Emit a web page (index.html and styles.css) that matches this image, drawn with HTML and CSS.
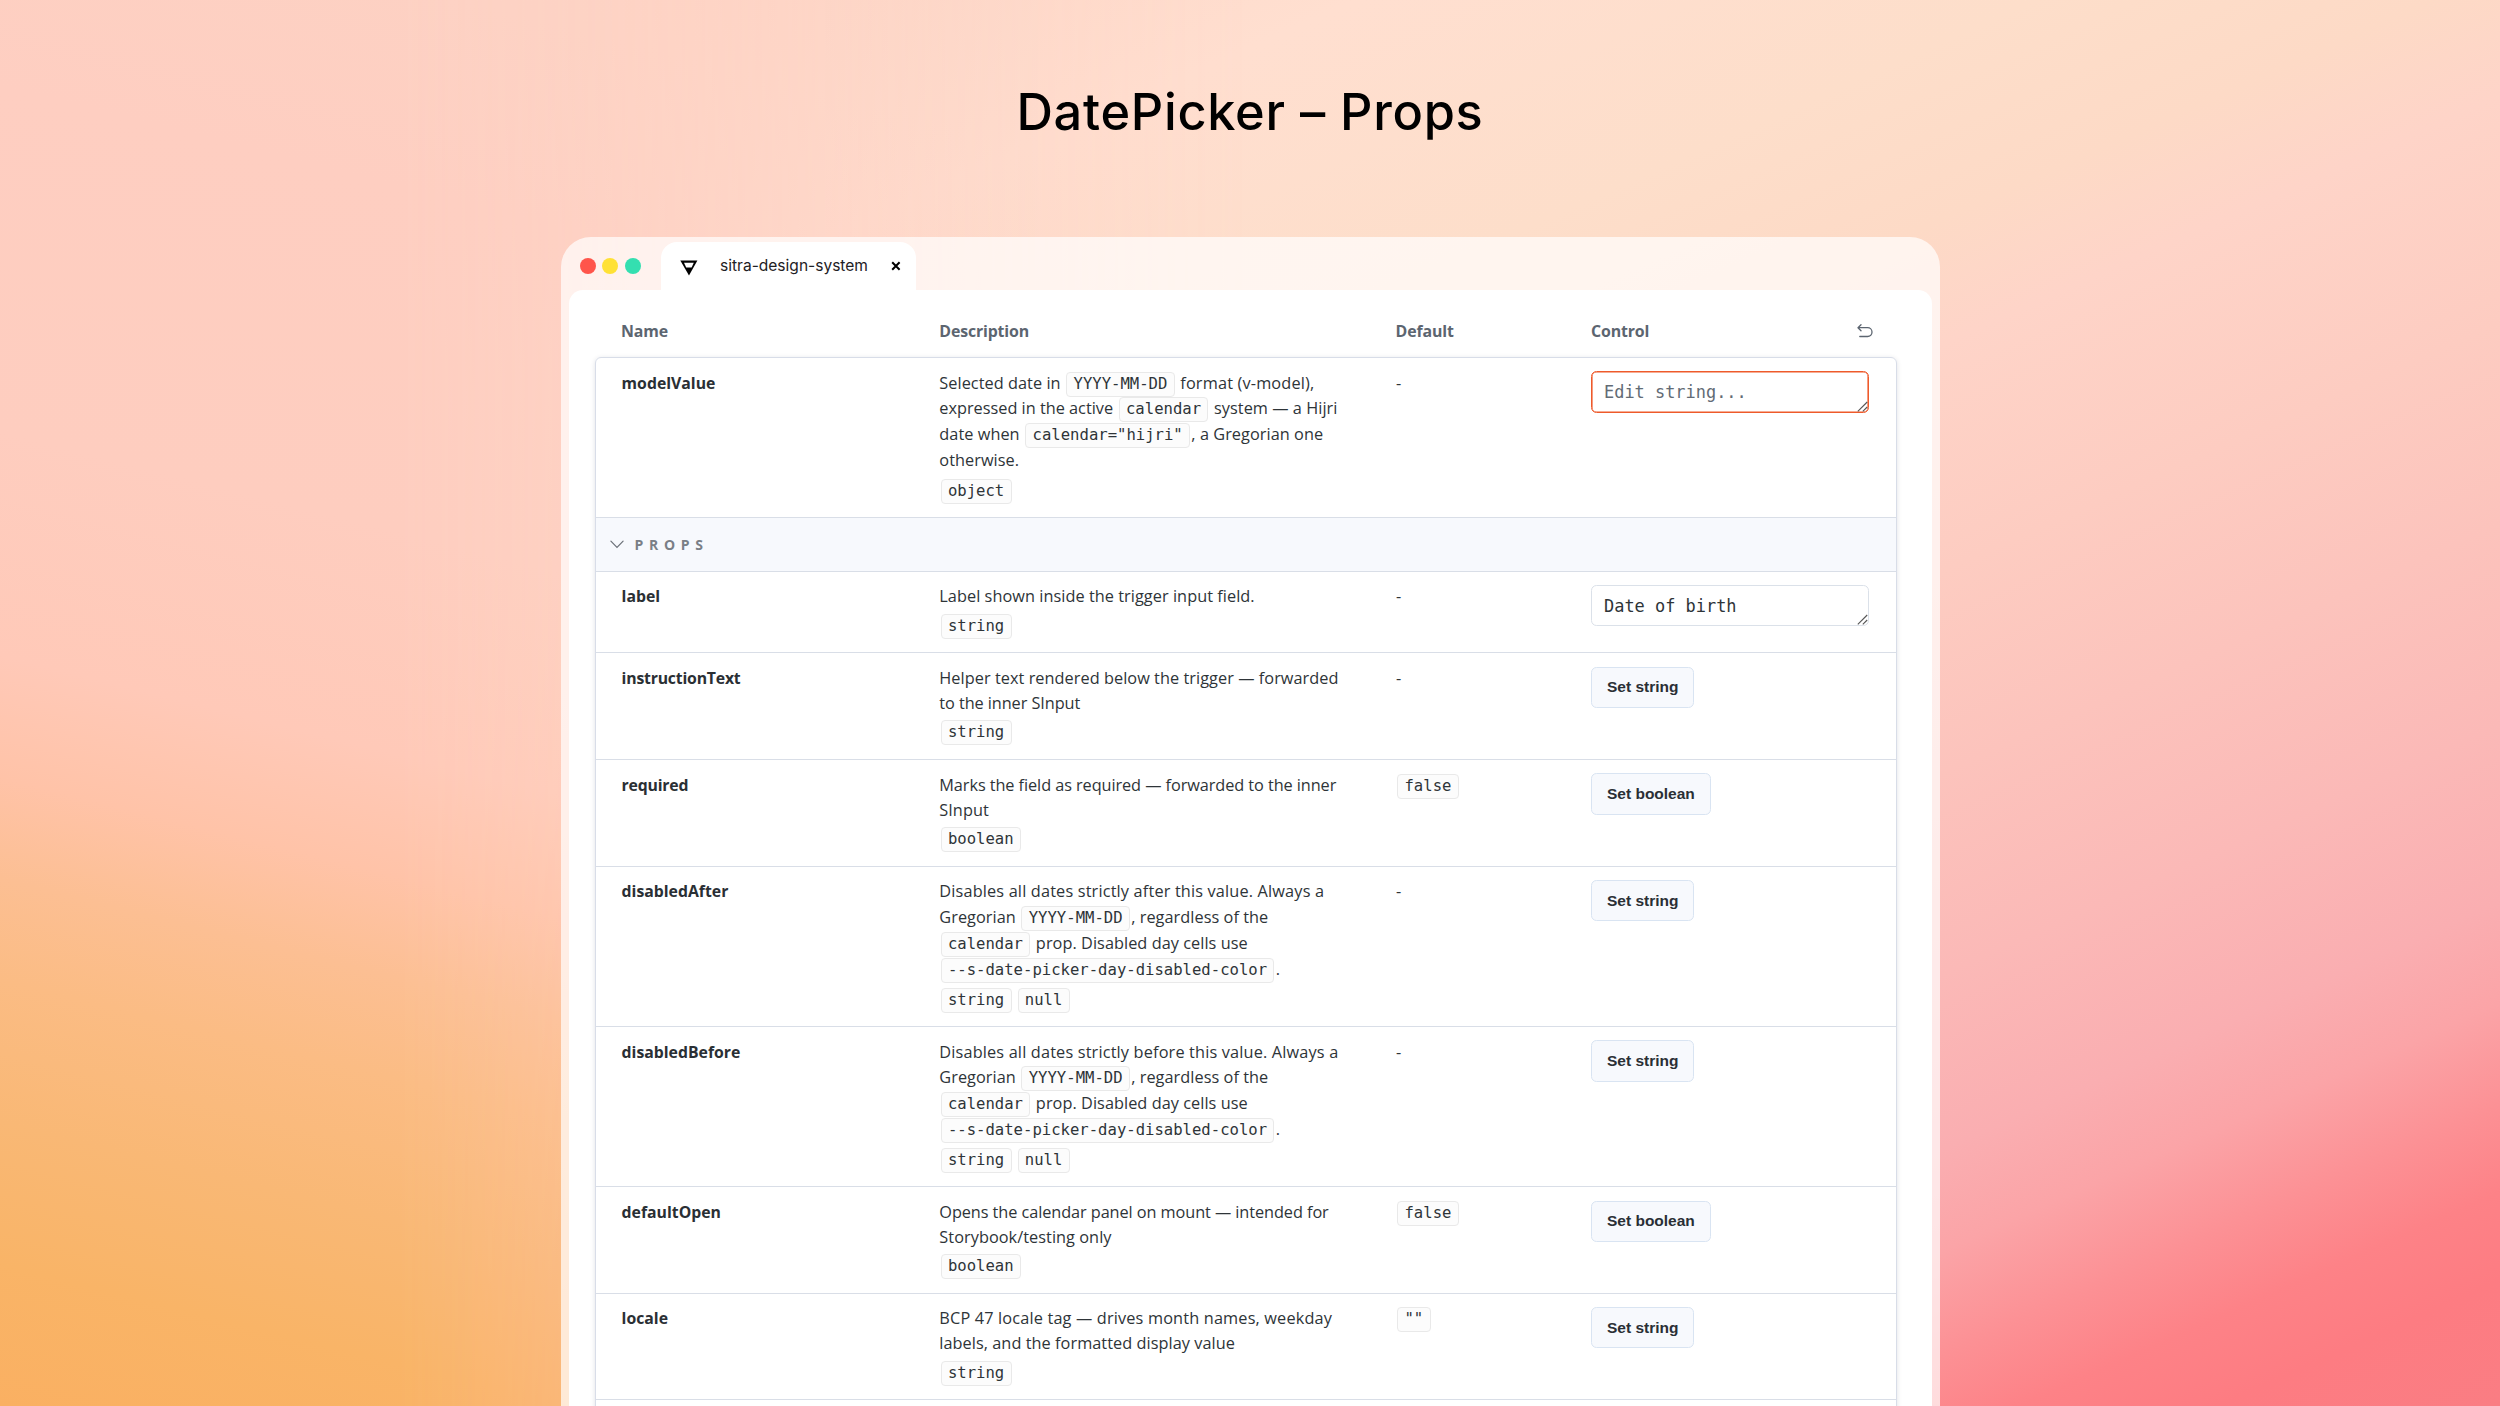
FILE: index.html
```html
<!DOCTYPE html>
<html lang="en">
<head>
<meta charset="utf-8">
<title>DatePicker – Props</title>
<link rel="stylesheet" href="styles.css">
</head>
<body>
<div class="page">
  <h1 class="title">DatePicker – Props</h1>
  <main class="window">
    <header class="tabbar">
      <div class="dots"><i class="dot red"></i><i class="dot yellow"></i><i class="dot green"></i></div>
      <div class="tab">
        <svg class="logo" viewBox="0 0 18 16" width="18" height="16"><path d="M.3.5h17.1L9 15.6z" fill="#000"/><path d="M4 2.7h9.8L11.6 7.6H6.2z" fill="#fff"/></svg>
        <span class="tab-name">sitra-design-system</span>
        <svg class="close" viewBox="0 0 10 10" width="10" height="10"><path d="M1.2 1.2l7.4 7.6M8.6 1.2L1.2 8.8" stroke="#000" stroke-width="2" fill="none"/></svg>
      </div>
    </header>
    <section class="content">
      <div class="grid head">
        <span>Name</span><span>Description</span><span>Default</span>
        <span class="head-control"><span>Control</span>
          <svg class="undo" viewBox="0 0 16 14" width="16" height="14"><path d="M4 .8L1 3.7l3 3M1.2 3.7h9.4a4.4 4.4 0 0 1 0 8.8H2.8" fill="none" stroke="#5c6570" stroke-width="1.3" stroke-linecap="round" stroke-linejoin="round"/></svg>
        </span>
      </div>
      <div class="table">
        <div class="grid row rich">
          <b class="name">modelValue</b>
          <div class="desc">
            <p>Selected date in <code>YYYY-MM-DD</code> <span class="wide">format (v-model),</span></p>
            <p><span class="flat">expressed in the active</span> <code>calendar</code> system — a Hijri</p>
            <p>date when <code>calendar="hijri"</code>, a Gregorian one</p>
            <p>otherwise.</p>
            <div class="types"><code>object</code></div>
          </div>
          <span class="default">-</span>
          <div class="control"><div class="field focus"><span>Edit string...</span><svg class="grip" viewBox="0 0 11 11" width="11" height="11"><path d="M.8 10.4L10.2 1M5.8 10.4l4.4-4.4" stroke="#555" stroke-width="1.1"/></svg></div></div>
        </div>
        <div class="section">
          <svg viewBox="0 0 14 9" width="14" height="9"><path d="M.9 1.1l6.1 6.2 6.1-6.2" fill="none" stroke="#6b7078" stroke-width="1.2" stroke-linecap="round"/></svg>
          <span>PROPS</span>
        </div>
        <div class="grid row">
          <b class="name">label</b>
          <div class="desc">
            <p>Label shown inside the trigger input field.</p>
            <div class="types"><code>string</code></div>
          </div>
          <span class="default">-</span>
          <div class="control"><div class="field"><span>Date of birth</span><svg class="grip" viewBox="0 0 11 11" width="11" height="11"><path d="M.8 10.4L10.2 1M5.8 10.4l4.4-4.4" stroke="#555" stroke-width="1.1"/></svg></div></div>
        </div>
        <div class="grid row">
          <b class="name snug">instructionText</b>
          <div class="desc">
            <p>Helper text rendered below the trigger — forwarded</p>
            <p class="tight">to the inner SInput</p>
            <div class="types"><code>string</code></div>
          </div>
          <span class="default">-</span>
          <div class="control"><button>Set string</button></div>
        </div>
        <div class="grid row">
          <b class="name snug">required</b>
          <div class="desc">
            <p class="tight">Marks the field as required — forwarded to the inner</p>
            <p>SInput</p>
            <div class="types"><code>boolean</code></div>
          </div>
          <span class="default"><code>false</code></span>
          <div class="control"><button>Set boolean</button></div>
        </div>
        <div class="grid row rich">
          <b class="name">disabledAfter</b>
          <div class="desc">
            <p class="wide">Disables all dates strictly after this value. Always a</p>
            <p>Gregorian <code>YYYY-MM-DD</code>, regardless of the</p>
            <p><code>calendar</code> prop. Disabled day cells use</p>
            <p><code>--s-date-picker-day-disabled-color</code>.</p>
            <div class="types"><code>string</code><code>null</code></div>
          </div>
          <span class="default">-</span>
          <div class="control"><button>Set string</button></div>
        </div>
        <div class="grid row rich">
          <b class="name">disabledBefore</b>
          <div class="desc">
            <p class="wide">Disables all dates strictly before this value. Always a</p>
            <p>Gregorian <code>YYYY-MM-DD</code>, regardless of the</p>
            <p><code>calendar</code> prop. Disabled day cells use</p>
            <p><code>--s-date-picker-day-disabled-color</code>.</p>
            <div class="types"><code>string</code><code>null</code></div>
          </div>
          <span class="default">-</span>
          <div class="control"><button>Set string</button></div>
        </div>
        <div class="grid row">
          <b class="name">defaultOpen</b>
          <div class="desc">
            <p class="tight">Opens the calendar panel on mount — intended for</p>
            <p>Storybook/testing only</p>
            <div class="types"><code>boolean</code></div>
          </div>
          <span class="default"><code>false</code></span>
          <div class="control"><button>Set boolean</button></div>
        </div>
        <div class="grid row">
          <b class="name">locale</b>
          <div class="desc">
            <p class="wide">BCP 47 locale tag — drives month names, weekday</p>
            <p>labels, and the formatted display value</p>
            <div class="types"><code>string</code></div>
          </div>
          <span class="default"><code>""</code></span>
          <div class="control"><button>Set string</button></div>
        </div>
        <div class="grid row"></div>
      </div>
    </section>
  </main>
</div>
</body>
</html>
```
FILE: styles.css
```css
* { box-sizing: border-box; }
html, body { margin: 0; height: 100%; overflow: hidden; }

body {
  font-family: "Open Sans", sans-serif;
  font-size: 16.3px;
  color: #2e3438;
}

.page {
  position: relative;
  height: 1406px;
  overflow: hidden;
  display: flex;
  flex-direction: column;
  align-items: center;
  background: linear-gradient(156deg, #ffd6ca 0%, #fed8c8 12%, #ffdfd0 24%, #fddeca 36%, #fddac6 43%, #fed4c8 48%, #fdccc1 57%, #fcc3bc 65%, #fbb9b7 73%, #faaeb1 80%, #fba4a7 84%, #fc9195 88%, #fd8287 91.5%, #fd7c82 95%, #fa7d83 100%);
}
/* warm wash on the left, fading out towards the centre */
.page::before {
  content: "";
  position: absolute;
  inset: 0;
  background: linear-gradient(194deg, #fdd3c5 0%, #fdd1c3 25%, #fecec1 35%, #fecdbf 52%, #ffc9b8 63%, #ffc3a8 69%, #fcbf93 74%, #fbbc84 79%, #f9b875 86%, #f9b467 93%, #fab062 100%);
  -webkit-mask-image: linear-gradient(90deg, #000 16%, transparent 50%);
  mask-image: linear-gradient(90deg, #000 16%, transparent 50%);
}

.title {
  position: relative;
  flex: none;
  margin: 81px 0 0;
  height: 156px;
  font: 500 50.5px/62px Inter, sans-serif;
  letter-spacing: .72px;
  color: #000;
}

.window {
  position: relative;
  flex: none;
  width: 1379px;
  height: 1300px;
  margin-left: 1px;
  padding: 0 8px;
  border-radius: 30px 30px 0 0;
  background: rgba(255, 255, 255, .7);
}

.tabbar { display: flex; align-items: flex-end; height: 53px; }
.dots { display: flex; gap: 6.3px; width: 92px; padding: 0 0 16px 11px; }
.dot { width: 16px; height: 16px; border-radius: 50%; }
.red { background: #ff554b; }
.yellow { background: #ffe135; }
.green { background: #34dfb0; }

.tab {
  display: flex;
  align-items: center;
  width: 255px;
  height: 48px;
  padding: 0 15px 0 18.5px;
  border-radius: 16px 16px 0 0;
  background: #fff;
}
.logo { position: relative; top: 2px; }
.tab-name { margin: 0 auto 0 22.5px; font: 15.55px/24px Inter, sans-serif; color: #1e2124; }

.content {
  height: 1260px;
  padding: 0 35px 0 26px;
  border-radius: 14px 14px 0 0;
  background: #fff;
}

.grid { display: grid; grid-template-columns: 318.3px 456.3px 195.4px 1fr; }
.head {
  height: 67px;
  padding: 27.5px 24px 0 26px;
  font-weight: 700;
  font-size: 15.9px;
  line-height: 26px;
  letter-spacing: -.15px;
  color: #5c6570;
}
.head-control { display: flex; justify-content: space-between; align-items: center; height: 26px; }

.table {
  border: 1px solid #d8dde8;
  border-radius: 6px;
  box-shadow: 0 1px 5px rgba(20, 30, 60, .13);
}
.row { padding: 12.7px 26px 0 25px; height: 106.7px; border-bottom: 1px solid #d9dee7; }
.row.rich { height: 160.2px; }
.section + .row { height: 81.7px; }
.name { font-size: 15.8px; line-height: 25px; letter-spacing: 0; color: #2a2f34; padding-left: .6px; }
.name.snug { letter-spacing: -.2px; }

.desc, .default { white-space: nowrap; line-height: 25px; letter-spacing: .05px; }
.default { padding-left: .3px; }
.desc p { margin: 0; height: 25px; }
.rich p:nth-child(n+2) { height: 26.1px; }
.rich p:first-child { height: 25.6px; }
.desc .tight { letter-spacing: -.075px; }
.desc .wide { letter-spacing: .16px; }
.desc .flat { letter-spacing: 0; }

code {
  display: inline-block;
  margin: 0 1.3px;
  padding: 0 6.3px;
  border: 1px solid #e9e9e9;
  border-radius: 4px;
  background: #fcfcfc;
  font: 15.6px/23px "DejaVu Sans Mono", monospace;
  letter-spacing: 0;
}
.types { display: flex; gap: 3.4px; margin-top: 4.5px; }

.control { padding-top: .8px; }
.field {
  position: relative;
  width: 278.5px;
  height: 41.4px;
  padding-left: 12px;
  border: 1px solid #dbe1e9;
  border-radius: 5.5px;
  background: #fff;
  font: 16.95px/40px "DejaVu Sans Mono", monospace;
}
.focus { border-color: #ee5a2b; box-shadow: inset 0 0 0 .6px #ee5a2b; color: #626b75; }
.grip { position: absolute; right: 0; bottom: 0; }

button {
  display: block;
  height: 41.2px;
  padding: 0 15px;
  border: 1px solid #d9e4f2;
  border-radius: 5.5px;
  background: #f7f9fd;
  font: bold 15.5px "Liberation Sans", Arial, sans-serif;
  color: #2a2f35;
}

.section {
  display: flex;
  align-items: center;
  gap: 10.5px;
  height: 53.4px;
  padding-left: 14px;
  border-bottom: 1px solid #d9dee7;
  background: #f7f9fd;
  font-weight: 700;
  font-size: 14px;
  letter-spacing: 5.7px;
  color: #7a7f86;
}
```
